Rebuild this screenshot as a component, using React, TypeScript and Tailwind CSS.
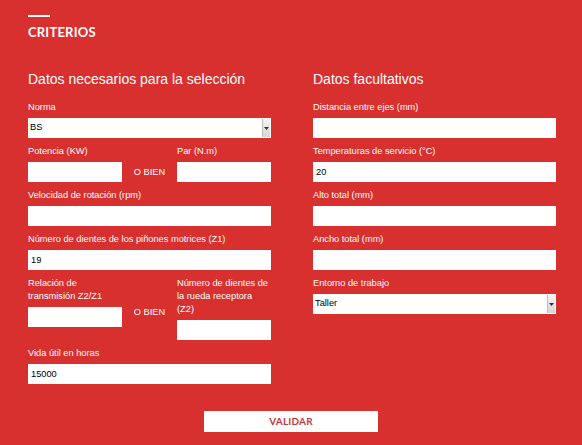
import React from "react";

const labelCls = "block text-[9.25px] leading-[13px] text-white mb-[4px]";
const inputCls = "block w-full h-[20px] bg-white pl-[3px] text-[9.25px] text-black outline-none border-0";

// old-style select with the little grey arrow box at the right
const Select = ({ value }: { value: string }) => (
  <div className="relative h-[20px] w-full bg-white">
    <div className="h-full flex items-center pl-[2px] text-[9.25px] text-black">{value}</div>
    <div className="absolute right-[1px] top-[1px] bottom-[1px] w-[8px] bg-gradient-to-b from-[#f4f4f4] to-[#d6d6d6] border-l border-[#bdbdbd] flex items-center justify-center">
      <svg width="5" height="3" viewBox="0 0 5 3">
        <path d="M0 0H5L2.5 3Z" fill="#333" />
      </svg>
    </div>
  </div>
);

const Field = ({ label, value = "" }: { label: React.ReactNode; value?: string }) => (
  <div>
    <label className={labelCls}>{label}</label>
    <input className={inputCls} defaultValue={value} />
  </div>
);

export default function App() {
  return (
    <div
      className="w-[582px] h-[445px] bg-[#d8302f] overflow-hidden pt-[15px] px-[28px]"
      style={{ fontFamily: "'Liberation Sans', Arial, sans-serif" }}
    >
      <div className="w-[22px] h-[2px] bg-white" />
      <h1 className="mt-[7px] text-[13px] leading-[16px] font-bold text-white tracking-[0.2px]" style={{ fontFamily: "Lato, sans-serif" }}>
        CRITERIOS
      </h1>

      <div className="grid grid-cols-[243px_243px] gap-x-[42px] mt-[30px]">
        {/* required data */}
        <div className="flex flex-col gap-[7px]">
          <h2 className="text-[14px] leading-[18px] text-white mb-[6px]">Datos necesarios para la selección</h2>
          <div>
            <label className={labelCls}>Norma</label>
            <Select value="BS" />
          </div>
          <div className="flex">
            <div className="w-[94px]">
              <Field label="Potencia (KW)" />
            </div>
            <div className="flex-1 text-center text-[9.25px] leading-[13px] text-white pt-[21px]">O BIEN</div>
            <div className="w-[94px]">
              <Field label="Par (N.m)" />
            </div>
          </div>
          <Field label="Velocidad de rotación (rpm)" />
          <Field label="Número de dientes de los piñones motrices (Z1)" value="19" />
          <div className="flex items-start">
            <div className="w-[94px]">
              <Field label={<>Relación de<br />transmisión Z2/Z1</>} />
            </div>
            <div className="flex-1 text-center text-[9.25px] leading-[13px] text-white pt-[29px]">O BIEN</div>
            <div className="w-[94px]">
              <Field label={<>Número de dientes de<br />la rueda receptora<br />(Z2)</>} />
            </div>
          </div>
          <Field label="Vida útil en horas" value="15000" />
        </div>

        {/* optional data */}
        <div className="flex flex-col gap-[7px]">
          <h2 className="text-[14px] leading-[18px] text-white mb-[6px]">Datos facultativos</h2>
          <Field label="Distancia entre ejes (mm)" />
          <Field label="Temperaturas de servicio (°C)" value="20" />
          <Field label="Alto total (mm)" />
          <Field label="Ancho total (mm)" />
          <div>
            <label className={labelCls}>Entorno de trabajo</label>
            <Select value="Taller" />
          </div>
        </div>
      </div>

      <div className="flex justify-center mt-[27px]">
        <button
          className="w-[174px] h-[21px] bg-white text-[#c9353a] text-[10px] font-bold tracking-[0.2px]"
          style={{ fontFamily: "Lato, sans-serif" }}
        >
          VALIDAR
        </button>
      </div>
    </div>
  );
}
